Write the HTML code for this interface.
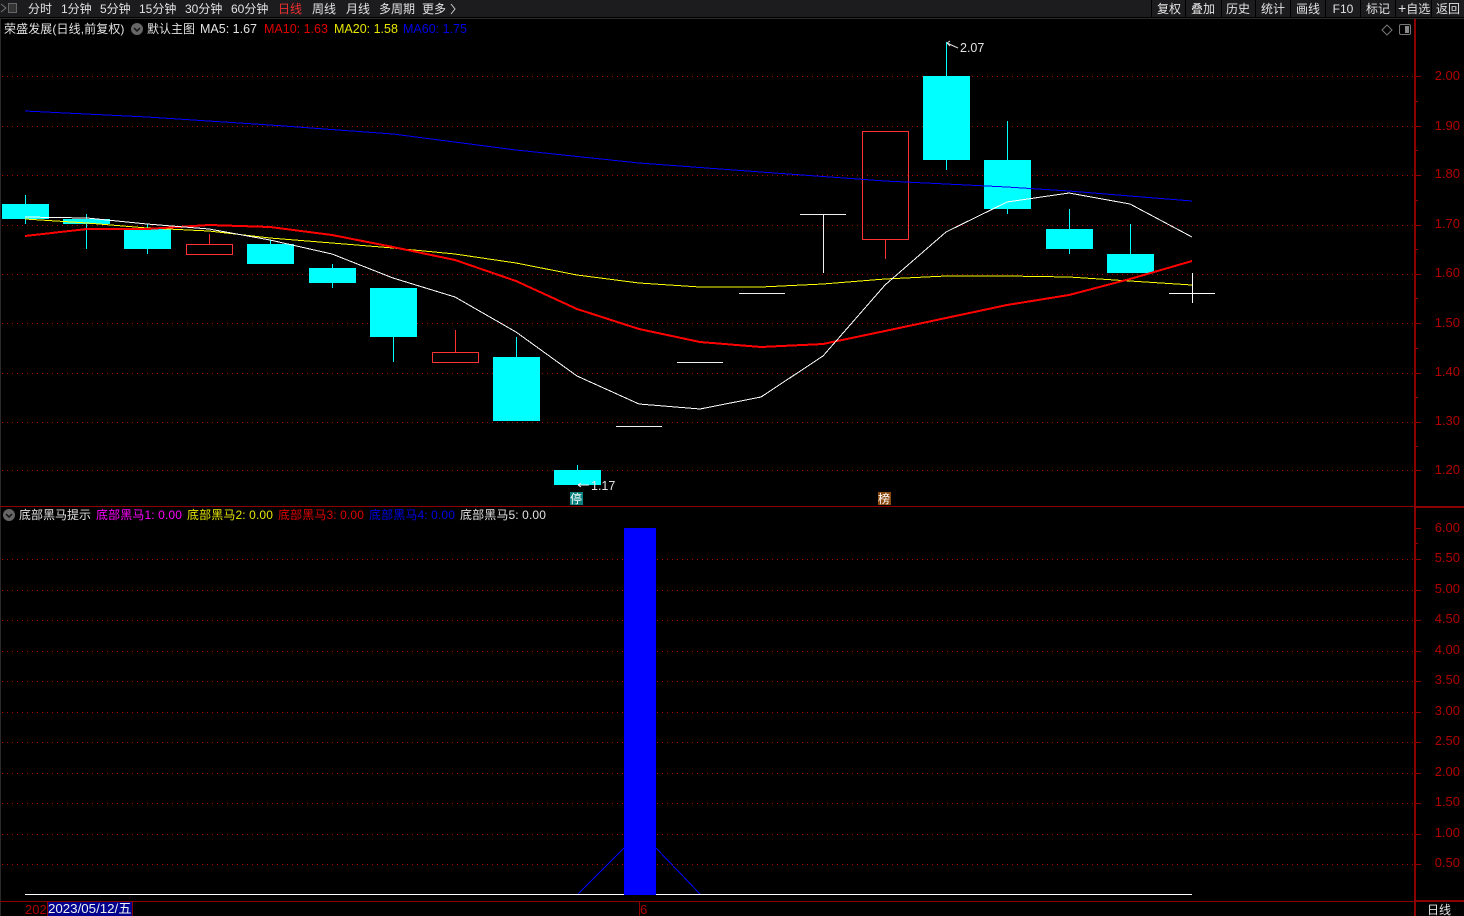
<!DOCTYPE html>
<html lang="zh"><head><meta charset="utf-8"><title>荣盛发展</title>
<style>
html,body{margin:0;padding:0;background:#000;width:1464px;height:916px;overflow:hidden}
svg{display:block;position:absolute;left:0;top:0}
text{font-family:"Liberation Sans","Noto Sans CJK SC",sans-serif;font-size:12px;fill:#e2e2e2}
.r{fill:#b00000;font-size:13px;text-anchor:end}
.m{font-size:12.500px}
.b{fill:#e2e2e2;text-anchor:middle}
</style></head><body>
<svg width="1464" height="916" viewBox="0 0 1464 916">
<rect width="1464" height="916" fill="#000"/>
<!-- top bar -->
<rect width="1464" height="17" fill="#1c1c1e"/>
<rect y="17" width="1464" height="1" fill="#000"/>
<rect y="18" width="1464" height="1" fill="#2c2c2c"/>
<rect x="0" y="19" width="1" height="897" fill="#2a2a2a"/>
<path d="M1 4l5 4-5 4" stroke="#777" fill="none"/>
<rect x="8.500" y="3.500" width="8" height="9" fill="#333" stroke="#666" stroke-width="1"/>
<text x="28" y="13">分时</text><text x="61" y="13">1分钟</text><text x="100" y="13">5分钟</text>
<text x="139" y="13">15分钟</text><text x="185" y="13">30分钟</text><text x="231" y="13">60分钟</text>
<text x="278" y="13" style="fill:#f03030">日线</text><text x="312" y="13">周线</text><text x="346" y="13">月线</text>
<text x="379" y="13">多周期</text><text x="422" y="13">更多</text>
<path d="M451 4l4 5-4 5" stroke="#ccc" fill="none"/>
<g fill="#000"><rect x="1151" y="0" width="1" height="17"/><rect x="1185" y="0" width="1" height="17"/><rect x="1221" y="0" width="1" height="17"/><rect x="1255" y="0" width="1" height="17"/><rect x="1290" y="0" width="1" height="17"/><rect x="1325" y="0" width="1" height="17"/><rect x="1360" y="0" width="1" height="17"/><rect x="1395" y="0" width="1" height="17"/><rect x="1431" y="0" width="1" height="17"/></g>
<text class="b" x="1169" y="13">复权</text><text class="b" x="1203" y="13">叠加</text><text class="b" x="1238" y="13">历史</text>
<text class="b" x="1273" y="13">统计</text><text class="b" x="1308" y="13">画线</text><text class="b" x="1343" y="13">F10</text>
<text class="b" x="1378" y="13">标记</text><text x="1398" y="13"><tspan style="font-size:14px">+</tspan>自选</text><text class="b" x="1448" y="13">返回</text>
<!-- legend -->
<text x="4" y="33" style="letter-spacing:.1px">荣盛发展(日线,前复权)</text>
<circle cx="137" cy="29" r="6" fill="#666"/><path d="M134 28l3 3 3-3" stroke="#111" stroke-width="1.500" fill="none"/>
<text x="147" y="33">默认主图</text>
<text class="m" x="200" y="33">MA5: 1.67</text>
<text class="m" x="264" y="33" style="fill:#e00000">MA10: 1.63</text>
<text class="m" x="334" y="33" style="fill:#e6e600">MA20: 1.58</text>
<text class="m" x="403" y="33" style="fill:#0000e6">MA60: 1.75</text>
<path d="M1387 25l5 5-5 5-5-5z" stroke="#777" fill="none"/>
<rect x="1399.500" y="24.500" width="11" height="10" rx="1.500" stroke="#777" fill="#000"/><rect x="1405" y="26" width="4" height="7" fill="#888"/>
<g shape-rendering="crispEdges">
<!-- gridlines -->
<g stroke="#b00000" stroke-width="1" stroke-dasharray="1 4">
<path d="M2 76.500H1414M2 126.500H1414M2 175.500H1414M2 225.500H1414M2 274.500H1414M2 323.500H1414M2 373.500H1414M2 422.500H1414M2 470.500H1414"/>
<path d="M2 559.500H1414M2 590.500H1414M2 620.500H1414M2 651.500H1414M2 681.500H1414M2 712.500H1414M2 742.500H1414M2 773.500H1414M2 803.500H1414M2 834.500H1414M2 864.500H1414"/>
</g>
<!-- axes -->
<rect x="1414" y="19" width="2" height="897" fill="#8c0000"/>
<rect x="0" y="506" width="1414" height="1" fill="#8c0000"/><rect x="1414" y="506" width="50" height="2" fill="#8c0000"/>
<rect x="0" y="901" width="1414" height="1" fill="#8c0000"/><rect x="1414" y="900" width="50" height="2" fill="#8c0000"/>
<g fill="#8c0000">
<rect x="1416" y="76" width="5" height="1"/><rect x="1416" y="126" width="5" height="1"/><rect x="1416" y="175" width="5" height="1"/><rect x="1416" y="225" width="5" height="1"/><rect x="1416" y="274" width="5" height="1"/><rect x="1416" y="323" width="5" height="1"/><rect x="1416" y="373" width="5" height="1"/><rect x="1416" y="422" width="5" height="1"/><rect x="1416" y="470" width="5" height="1"/>
<rect x="1416" y="528" width="5" height="1"/><rect x="1416" y="559" width="5" height="1"/><rect x="1416" y="590" width="5" height="1"/><rect x="1416" y="620" width="5" height="1"/><rect x="1416" y="651" width="5" height="1"/><rect x="1416" y="681" width="5" height="1"/><rect x="1416" y="712" width="5" height="1"/><rect x="1416" y="742" width="5" height="1"/><rect x="1416" y="773" width="5" height="1"/><rect x="1416" y="803" width="5" height="1"/><rect x="1416" y="834" width="5" height="1"/><rect x="1416" y="864" width="5" height="1"/>
<rect x="1416" y="543" width="2" height="1"/><rect x="1416" y="101" width="2" height="1"/><rect x="1416" y="150" width="2" height="1"/><rect x="1416" y="200" width="2" height="1"/><rect x="1416" y="249" width="2" height="1"/><rect x="1416" y="298" width="2" height="1"/><rect x="1416" y="348" width="2" height="1"/><rect x="1416" y="397" width="2" height="1"/><rect x="1416" y="446" width="2" height="1"/>
</g>
<!-- cyan candles -->
<g fill="#00ffff">
<rect x="25" y="195" width="1" height="29"/><rect x="2" y="204" width="47" height="15"/>
<rect x="86" y="214" width="1" height="35"/><rect x="63" y="219" width="47" height="5"/>
<rect x="147" y="224" width="1" height="30"/><rect x="124" y="229" width="47" height="20"/>
<rect x="270" y="240" width="1" height="6"/><rect x="247" y="244" width="47" height="20"/>
<rect x="332" y="264" width="1" height="24"/><rect x="309" y="268" width="47" height="15"/>
<rect x="393" y="288" width="1" height="74"/><rect x="370" y="288" width="47" height="49"/>
<rect x="516" y="337" width="1" height="24"/><rect x="493" y="357" width="47" height="64"/>
<rect x="577" y="465" width="1" height="6"/><rect x="554" y="470" width="47" height="15"/>
<rect x="946" y="42" width="1" height="128"/><rect x="923" y="76" width="47" height="84"/>
<rect x="1007" y="121" width="1" height="93"/><rect x="984" y="160" width="47" height="49"/>
<rect x="1069" y="209" width="1" height="45"/><rect x="1046" y="229" width="47" height="20"/>
<rect x="1130" y="224" width="1" height="30"/><rect x="1107" y="254" width="47" height="19"/>
</g>
<!-- red hollow candles -->
<g fill="none" stroke="#ff3333">
<path d="M209.500 234V244"/><rect x="186.500" y="244.500" width="46" height="10"/>
<path d="M455.500 330V352"/><rect x="432.500" y="352.500" width="46" height="10"/>
<path d="M885.500 240V259"/><rect x="862.500" y="131.500" width="46" height="108"/>
</g>
<!-- doji -->
<g fill="#f0f0f0">
<rect x="616" y="426" width="46" height="1"/><rect x="677" y="362" width="46" height="1"/>
<rect x="739" y="293" width="46" height="1"/>
<rect x="800" y="214" width="46" height="1"/><rect x="823" y="214" width="1" height="59"/>
</g>
<!-- MA lines -->
<polyline fill="none" stroke="#0000ff" stroke-width="1" points="25,111 147,117 270,125 393,134 516,150 639,163 761,172 885,181 1007,187 1069,191 1130,196 1192,201"/>
<polyline fill="none" stroke="#ffff00" stroke-width="1" points="25,219 87,223 147,228 209,231 270,238 332,243 393,248 455,254 516,263 577,275 639,283 700,287 761,287 823,284 885,279 946,276 1007,276 1069,277 1130,281 1192,285"/>
<polyline fill="none" stroke="#ff0000" stroke-width="2" points="25,236 87,229 147,229 209,225 270,227 332,235 393,247 455,260 516,281 577,309 639,329 700,342 761,347 823,344 885,331 946,318 1007,305 1069,295 1130,279 1192,261"/>
<polyline fill="none" stroke="#ffffff" stroke-width="1" points="25,217 87,218 147,224 209,229 270,240 332,254 393,278 455,297 516,332 577,376 639,404 700,409 761,397 823,356 885,285 946,232 1007,202 1069,193 1130,204 1192,237"/>
<g fill="#fff">
<rect x="1169" y="293" width="46" height="1"/><rect x="1192" y="273" width="1" height="30"/>
</g>
</g>
<!-- annotations -->
<path d="M947 43l11 5M947 43l3-2M947 43l3 3" stroke="#ddd" fill="none"/>
<text x="960" y="52" class="m">2.07</text>
<path d="M578 485h11M578 485l3-2M578 485l3 2" stroke="#eee" fill="none"/>
<text x="591" y="490" class="m">1.17</text>
<rect x="570" y="492" width="13" height="13" fill="#0a8080"/><text x="570" y="503" style="fill:#fff">停</text>
<rect x="878" y="492" width="13" height="13" fill="#8a4a10"/><text x="878" y="503" style="fill:#fff">榜</text>
<!-- price labels -->
<text class="r" x="1460" y="80">2.00</text><text class="r" x="1460" y="130">1.90</text><text class="r" x="1460" y="178">1.80</text><text class="r" x="1460" y="228">1.70</text><text class="r" x="1460" y="277">1.60</text><text class="r" x="1460" y="327">1.50</text><text class="r" x="1460" y="376">1.40</text><text class="r" x="1460" y="425">1.30</text><text class="r" x="1460" y="474">1.20</text>
<text class="r" x="1460" y="532">6.00</text><text class="r" x="1460" y="562">5.50</text><text class="r" x="1460" y="593">5.00</text><text class="r" x="1460" y="623">4.50</text><text class="r" x="1460" y="654">4.00</text><text class="r" x="1460" y="684">3.50</text><text class="r" x="1460" y="715">3.00</text><text class="r" x="1460" y="745">2.50</text><text class="r" x="1460" y="776">2.00</text><text class="r" x="1460" y="806">1.50</text><text class="r" x="1460" y="837">1.00</text><text class="r" x="1460" y="867">0.50</text>
<!-- lower legend -->
<circle cx="9" cy="515" r="6" fill="#666"/><path d="M6 514l3 3 3-3" stroke="#111" stroke-width="1.500" fill="none"/>
<text x="19" y="519">底部黑马提示</text>
<text x="96" y="519" style="fill:#ff00ff;letter-spacing:.12px">底部黑马1: 0.00</text>
<text x="187" y="519" style="fill:#e6e600;letter-spacing:.12px">底部黑马2: 0.00</text>
<text x="278" y="519" style="fill:#e00000;letter-spacing:.12px">底部黑马3: 0.00</text>
<text x="369" y="519" style="fill:#0000e6;letter-spacing:.12px">底部黑马4: 0.00</text>
<text x="460" y="519" style="letter-spacing:.12px">底部黑马5: 0.00</text>
<!-- lower chart -->
<path d="M578 894L624 848M656 848L700 894" stroke="#0000ff" fill="none" shape-rendering="crispEdges"/>
<g shape-rendering="crispEdges">
<rect x="25" y="894" width="1167" height="1" fill="#fff"/>
<rect x="624" y="528" width="32" height="367" fill="#0000ff"/>
<!-- date axis -->
<rect x="639" y="902" width="1" height="14" fill="#8c0000"/>
<rect x="47" y="902" width="86" height="14" fill="#00008c"/>
<rect x="34" y="902" width="0" height="14" fill="#8c0000"/>
<rect x="47" y="902" width="1" height="14" fill="#8c0000"/><rect x="132" y="902" width="1" height="14" fill="#8c0000"/>
</g>
<text x="25" y="914" style="fill:#b00000;font-size:13px">202</text>
<text x="48" y="913" style="fill:#f0f0f0;font-size:13.300px">2023/05/12/五</text>
<text x="640" y="914" style="fill:#b00000;font-size:13px">6</text>
<text x="1427" y="914">日线</text>
</svg>
</body></html>
